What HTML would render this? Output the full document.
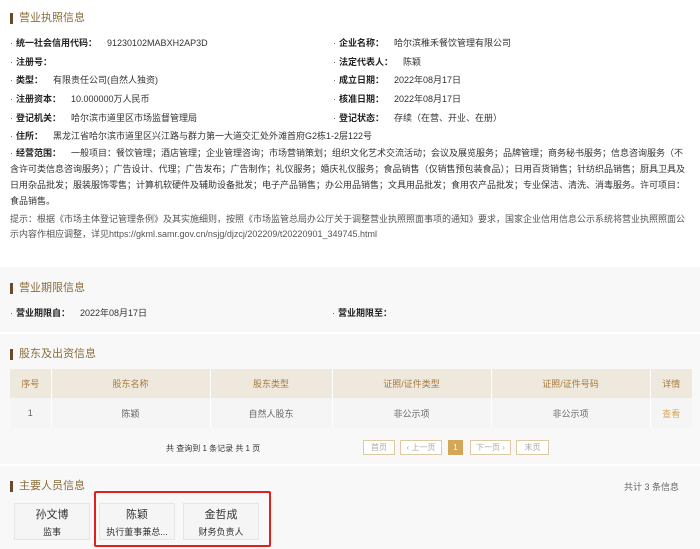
<!DOCTYPE html>
<html><head><meta charset="utf-8"><style>
*{margin:0;padding:0;box-sizing:border-box}
body{width:700px;height:549px;overflow:hidden;background:#fff;font-family:"Liberation Sans","Noto Sans CJK SC",sans-serif;font-size:9px;color:#333;position:relative}
.a{position:absolute;white-space:nowrap}
.t{font-size:11px;color:#8a6d3b;padding-left:6px;border-left:3px solid #6b4a2a;line-height:11px}
.l{font-weight:bold;color:#222}
.l:before{content:"·";font-weight:normal;margin-right:3px;color:#555}
.gray{position:absolute;left:0;width:700px;background:#f8f8f8}
table{border-collapse:collapse;position:absolute;left:10px;top:369px;width:682px;font-size:9px}
th{background:#efe8dd;color:#a57a3e;font-weight:normal;height:29px;border-right:1px solid #fff}
td{background:#f5f5f5;color:#666;height:30px;text-align:center;border-right:1px solid #fff}
.pg{position:absolute;top:440px;height:15px;border:1px solid #dcc9a5;background:#fff;color:#aaa;font-size:8px;text-align:center;line-height:13px}
.card{position:absolute;top:503px;width:76px;height:37px;background:#f5f5f5;border:1px solid #e6e6e6;text-align:center;color:#333}
.card b{display:block;font-weight:normal;font-size:11px;margin-top:5px;line-height:13px}
.card span{display:block;font-size:9px;margin-top:3px}
</style></head><body>
<div class="a t" style="left:10px;top:13px">营业执照信息</div>
<div class="a" style="left:10px;top:36px"><span class="l">统一社会信用代码：</span>&nbsp;&nbsp;&nbsp;&nbsp;91230102MABXH2AP3D</div>
<div class="a" style="left:10px;top:55px"><span class="l">注册号：</span></div>
<div class="a" style="left:10px;top:73px"><span class="l">类型：</span>&nbsp;&nbsp;&nbsp;&nbsp;有限责任公司(自然人独资)</div>
<div class="a" style="left:10px;top:92px"><span class="l">注册资本：</span>&nbsp;&nbsp;&nbsp;&nbsp;10.000000万人民币</div>
<div class="a" style="left:10px;top:111px"><span class="l">登记机关：</span>&nbsp;&nbsp;&nbsp;&nbsp;哈尔滨市道里区市场监督管理局</div>
<div class="a" style="left:10px;top:129px"><span class="l">住所：</span>&nbsp;&nbsp;&nbsp;&nbsp;黑龙江省哈尔滨市道里区兴江路与群力第一大道交汇处外滩首府G2栋1-2层122号</div>
<div class="a" style="left:333px;top:36px"><span class="l">企业名称：</span>&nbsp;&nbsp;&nbsp;&nbsp;哈尔滨稚禾餐饮管理有限公司</div>
<div class="a" style="left:333px;top:55px"><span class="l">法定代表人：</span>&nbsp;&nbsp;&nbsp;&nbsp;陈颖</div>
<div class="a" style="left:333px;top:73px"><span class="l">成立日期：</span>&nbsp;&nbsp;&nbsp;&nbsp;2022年08月17日</div>
<div class="a" style="left:333px;top:92px"><span class="l">核准日期：</span>&nbsp;&nbsp;&nbsp;&nbsp;2022年08月17日</div>
<div class="a" style="left:333px;top:111px"><span class="l">登记状态：</span>&nbsp;&nbsp;&nbsp;&nbsp;存续（在营、开业、在册）</div>
<div style="position:absolute;left:10px;top:145px;width:680px;line-height:16px;white-space:normal"><span class="l">经营范围：</span>&nbsp;&nbsp;&nbsp;&nbsp;一般项目：餐饮管理；酒店管理；企业管理咨询；市场营销策划；组织文化艺术交流活动；会议及展览服务；品牌管理；商务秘书服务；信息咨询服务（不含许可类信息咨询服务）；广告设计、代理；广告发布；广告制作；礼仪服务；婚庆礼仪服务；食品销售（仅销售预包装食品）；日用百货销售；针纺织品销售；厨具卫具及日用杂品批发；服装服饰零售；计算机软硬件及辅助设备批发；电子产品销售；办公用品销售；文具用品批发；食用农产品批发；专业保洁、清洗、消毒服务。许可项目：食品销售。</div>
<div style="position:absolute;left:10px;top:212px;width:682px;line-height:15px;color:#555">提示：根据《市场主体登记管理条例》及其实施细则，按照《市场监管总局办公厅关于调整营业执照照面事项的通知》要求，国家企业信用信息公示系统将营业执照照面公示内容作相应调整，详见https://gkml.samr.gov.cn/nsjg/djzcj/202209/t20220901_349745.html</div>
<div class="gray" style="top:267px;height:65px"></div>
<div class="gray" style="top:334px;height:130px"></div>
<div class="gray" style="top:466px;height:83px"></div>
<div class="a t" style="left:10px;top:283px">营业期限信息</div>
<div class="a" style="left:10px;top:306px"><span class="l">营业期限自：</span>&nbsp;&nbsp;&nbsp;&nbsp;2022年08月17日</div>
<div class="a" style="left:332px;top:306px"><span class="l">营业期限至：</span></div>
<div class="a t" style="left:10px;top:349px">股东及出资信息</div>
<table><tr><th style="width:41px">序号</th><th style="width:159px">股东名称</th><th style="width:122px">股东类型</th><th style="width:159px">证照/证件类型</th><th style="width:159px">证照/证件号码</th><th style="border:0">详情</th></tr>
<tr><td>1</td><td>陈颖</td><td>自然人股东</td><td>非公示项</td><td>非公示项</td><td style="color:#d9a55a;border:0">查看</td></tr></table>
<div class="a" style="left:166px;top:443px;font-size:8px;color:#333">共 查询到 1 条记录 共 1 页</div>
<div class="pg" style="left:363px;width:32px">首页</div>
<div class="pg" style="left:400px;width:42px">‹ 上一页</div>
<div class="pg" style="left:448px;width:15px;background:#d3a75a;border-color:#d3a75a;color:#fff">1</div>
<div class="pg" style="left:470px;width:41px">下一页 ›</div>
<div class="pg" style="left:516px;width:33px">末页</div>
<div class="a t" style="left:10px;top:481px">主要人员信息</div>
<div class="a" style="left:624px;top:480px;color:#666;font-size:9px">共计 3 条信息</div>
<div class="card" style="left:14px"><b>孙文博</b><span>监事</span></div>
<div class="card" style="left:99px"><b>陈颖</b><span>执行董事兼总...</span></div>
<div class="card" style="left:183px"><b>金哲成</b><span>财务负责人</span></div>
<div style="position:absolute;left:94px;top:491px;width:177px;height:56px;border:2px solid #e02020;border-radius:2px"></div>
</body></html>
